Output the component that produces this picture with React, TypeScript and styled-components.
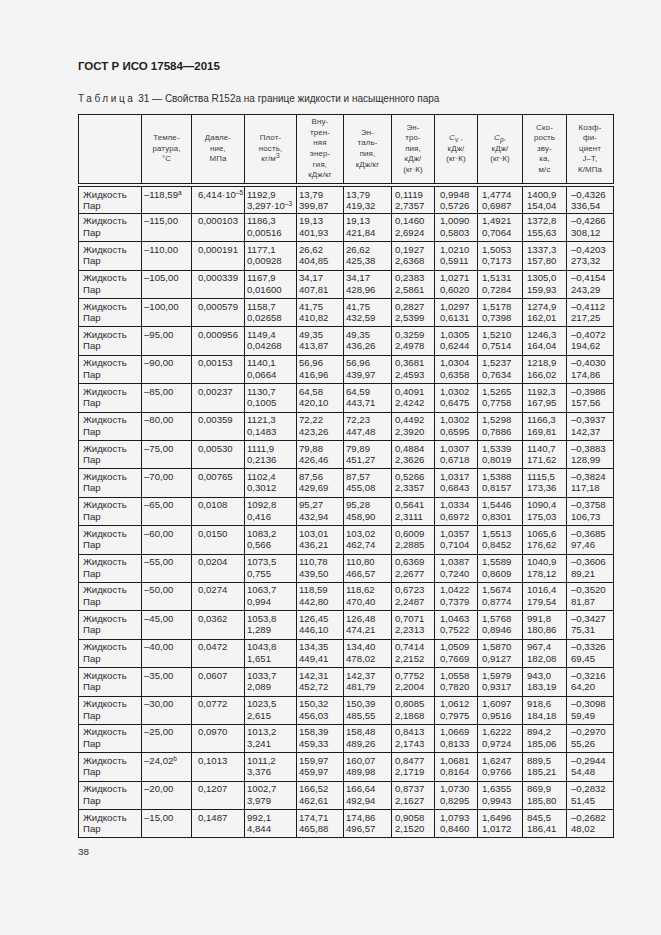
import React from 'react';
import styled, { createGlobalStyle } from 'styled-components';

const GlobalStyle = createGlobalStyle`
  html, body {
    margin: 0;
    padding: 0;
    background: #f4f4f4;
  }
  body {
    font-family: "Liberation Sans", Arial, sans-serif;
    color: #2b2b2b;
  }
`;

// widths of the 11 columns, px
const colWidths = [63, 50, 53, 52, 47, 48, 43, 43, 45, 44, 47];
// left indent of values in each column, px
const colPad = [4, 2, 6, 2, 2, 2, 3, 5, 4, 4, 4];

// temp, pressure, then liquid/vapour pairs
const data = [
  '–118,59^a 6,414·10^–5 1192,9 3,297·10^–3 13,79 399,87 13,79 419,32 0,1119 2,7357 0,9948 0,5726 1,4774 0,6987 1400,9 154,04 –0,4326 336,54',
  '–115,00 0,000103 1186,3 0,00516 19,13 401,93 19,13 421,84 0,1460 2,6924 1,0090 0,5803 1,4921 0,7064 1372,8 155,63 –0,4266 308,12',
  '–110,00 0,000191 1177,1 0,00928 26,62 404,85 26,62 425,38 0,1927 2,6368 1,0210 0,5911 1,5053 0,7173 1337,3 157,80 –0,4203 273,32',
  '–105,00 0,000339 1167,9 0,01600 34,17 407,81 34,17 428,96 0,2383 2,5861 1,0271 0,6020 1,5131 0,7284 1305,0 159,93 –0,4154 243,29',
  '–100,00 0,000579 1158,7 0,02658 41,75 410,82 41,75 432,59 0,2827 2,5399 1,0297 0,6131 1,5178 0,7398 1274,9 162,01 –0,4112 217,25',
  '–95,00 0,000956 1149,4 0,04268 49,35 413,87 49,35 436,26 0,3259 2,4978 1,0305 0,6244 1,5210 0,7514 1246,3 164,04 –0,4072 194,62',
  '–90,00 0,00153 1140,1 0,0664 56,96 416,96 56,96 439,97 0,3681 2,4593 1,0304 0,6358 1,5237 0,7634 1218,9 166,02 –0,4030 174,86',
  '–85,00 0,00237 1130,7 0,1005 64,58 420,10 64,59 443,71 0,4091 2,4242 1,0302 0,6475 1,5265 0,7758 1192,3 167,95 –0,3986 157,56',
  '–80,00 0,00359 1121,3 0,1483 72,22 423,26 72,23 447,48 0,4492 2,3920 1,0302 0,6595 1,5298 0,7886 1166,3 169,81 –0,3937 142,37',
  '–75,00 0,00530 1111,9 0,2136 79,88 426,46 79,89 451,27 0,4884 2,3626 1,0307 0,6718 1,5339 0,8019 1140,7 171,62 –0,3883 128,99',
  '–70,00 0,00765 1102,4 0,3012 87,56 429,69 87,57 455,08 0,5266 2,3357 1,0317 0,6843 1,5388 0,8157 1115,5 173,36 –0,3824 117,18',
  '–65,00 0,0108 1092,8 0,416 95,27 432,94 95,28 458,90 0,5641 2,3111 1,0334 0,6972 1,5446 0,8301 1090,4 175,03 –0,3758 106,73',
  '–60,00 0,0150 1083,2 0,566 103,01 436,21 103,02 462,74 0,6009 2,2885 1,0357 0,7104 1,5513 0,8452 1065,6 176,62 –0,3685 97,46',
  '–55,00 0,0204 1073,5 0,755 110,78 439,50 110,80 466,57 0,6369 2,2677 1,0387 0,7240 1,5589 0,8609 1040,9 178,12 –0,3606 89,21',
  '–50,00 0,0274 1063,7 0,994 118,59 442,80 118,62 470,40 0,6723 2,2487 1,0422 0,7379 1,5674 0,8774 1016,4 179,54 –0,3520 81,87',
  '–45,00 0,0362 1053,8 1,289 126,45 446,10 126,48 474,21 0,7071 2,2313 1,0463 0,7522 1,5768 0,8946 991,8 180,86 –0,3427 75,31',
  '–40,00 0,0472 1043,8 1,651 134,35 449,41 134,40 478,02 0,7414 2,2152 1,0509 0,7669 1,5870 0,9127 967,4 182,08 –0,3326 69,45',
  '–35,00 0,0607 1033,7 2,089 142,31 452,72 142,37 481,79 0,7752 2,2004 1,0558 0,7820 1,5979 0,9317 943,0 183,19 –0,3216 64,20',
  '–30,00 0,0772 1023,5 2,615 150,32 456,03 150,39 485,55 0,8085 2,1868 1,0612 0,7975 1,6097 0,9516 918,6 184,18 –0,3098 59,49',
  '–25,00 0,0970 1013,2 3,241 158,39 459,33 158,48 489,26 0,8413 2,1743 1,0669 0,8133 1,6222 0,9724 894,2 185,06 –0,2970 55,26',
  '–24,02^b 0,1013 1011,2 3,376 159,97 459,97 160,07 489,98 0,8477 2,1719 1,0681 0,8164 1,6247 0,9766 889,5 185,21 –0,2944 54,48',
  '–20,00 0,1207 1002,7 3,979 166,52 462,61 166,64 492,94 0,8737 2,1627 1,0730 0,8295 1,6355 0,9943 869,9 185,80 –0,2832 51,45',
  '–15,00 0,1487 992,1 4,844 174,71 465,88 174,86 496,57 0,9058 2,1520 1,0793 0,8460 1,6496 1,0172 845,5 186,41 –0,2682 48,02',
];

const Page = styled.div`
  padding: 59px 0 0 78px;
  width: 535px;
`;

const Title = styled.h1`
  margin: 0;
  font-size: 11.5px;
  line-height: 14px;
  font-weight: bold;
  color: #1e1e1e;
`;

const Caption = styled.p`
  margin: 20px 0 0;
  font-size: 10px;
  line-height: 12px;
  color: #2e2e2e;
`;

const Spaced = styled.span`
  letter-spacing: 2.6px;
`;

const Table = styled.table`
  margin-top: 9px;
  width: 535px;
  table-layout: fixed;
  border-collapse: collapse;
  border: 1.5px solid #1c1c1c;
`;

const HeadCell = styled.th`
  height: 68px;
  padding: 0 1px;
  border: 1.2px solid #1c1c1c;
  border-bottom: 4px double #1c1c1c;
  vertical-align: middle;
  text-align: center;
  font-weight: normal;
  font-size: 7.9px;
  line-height: 10.6px;
  letter-spacing: 0.15px;
  color: #3a3a3a;
`;

const Row = styled.tr`
  height: 28.4px;
`;

const Cell = styled.td<{ $pad: number }>`
  padding: 1.5px 1px 0 ${(p) => p.$pad}px;
  border: 1.2px solid #1c1c1c;
  vertical-align: top;
  font-size: 9.6px;
  line-height: 11.5px;
  white-space: nowrap;
  color: #2b2b2b;
`;

const Line = styled.div`
  display: block;
`;

const Sup = styled.sup`
  font-size: 6.5px;
  line-height: 0;
  vertical-align: 3.5px;
`;

const Sym = styled.span`
  font-style: italic;
`;

const Sub = styled.sub`
  font-size: 6.5px;
  line-height: 0;
  vertical-align: -1.5px;
  font-style: italic;
`;

const PageNumber = styled.div`
  margin-top: 8px;
  font-size: 9.8px;
  line-height: 12px;
  color: #2b2b2b;
`;

const fmt = (s: string) => {
  const [base, sup] = s.split('^');
  return sup ? (
    <>
      {base}
      <Sup>{sup}</Sup>
    </>
  ) : (
    base
  );
};

const headers: React.ReactNode[] = [
  '',
  <>Темпе-<br />ратура,<br />°С</>,
  <>Давле-<br />ние,<br />МПа</>,
  <>Плот-<br />ность,<br />кг/м<Sup>3</Sup></>,
  <>Вну-<br />трен-<br />няя<br />энер-<br />гия,<br />кДж/кг</>,
  <>Эн-<br />таль-<br />пия,<br />кДж/кг</>,
  <>Эн-<br />тро-<br />пия,<br />кДж/<br />(кг·К)</>,
  <><Sym>C</Sym><Sub>v</Sub> ,<br />кДж/<br />(кг·К)</>,
  <><Sym>C</Sym><Sub>p</Sub>,<br />кДж/<br />(кг·К)</>,
  <>Ско-<br />рость<br />зву-<br />ка,<br />м/с</>,
  <>Коэф-<br />фи-<br />циент<br />J–T,<br />К/МПа</>,
];

const pairs = [0, 1, 2, 3, 4, 5, 6, 7];

const App = () => (
  <>
    <GlobalStyle />
    <Page>
      <Title>ГОСТ Р ИСО 17584—2015</Title>
      <Caption>
        <Spaced>Таблица</Spaced> 31 — Свойства R152a на границе жидкости и насыщенного пара
      </Caption>
      <Table>
        <colgroup>
          {colWidths.map((w, i) => (
            <col key={i} style={{ width: w }} />
          ))}
        </colgroup>
        <thead>
          <tr>
            {headers.map((h, i) => (
              <HeadCell key={i}>{h}</HeadCell>
            ))}
          </tr>
        </thead>
        <tbody>
          {data.map((line, r) => {
            const v = line.split(' ');
            return (
              <Row key={r}>
                <Cell $pad={colPad[0]}>
                  <Line>Жидкость</Line>
                  <Line>Пар</Line>
                </Cell>
                <Cell $pad={colPad[1]}>{fmt(v[0])}</Cell>
                <Cell $pad={colPad[2]}>{fmt(v[1])}</Cell>
                {pairs.map((k) => (
                  <Cell key={k} $pad={colPad[k + 3]}>
                    <Line>{fmt(v[2 + k * 2])}</Line>
                    <Line>{fmt(v[3 + k * 2])}</Line>
                  </Cell>
                ))}
              </Row>
            );
          })}
        </tbody>
      </Table>
      <PageNumber>38</PageNumber>
    </Page>
  </>
);

export default App;
